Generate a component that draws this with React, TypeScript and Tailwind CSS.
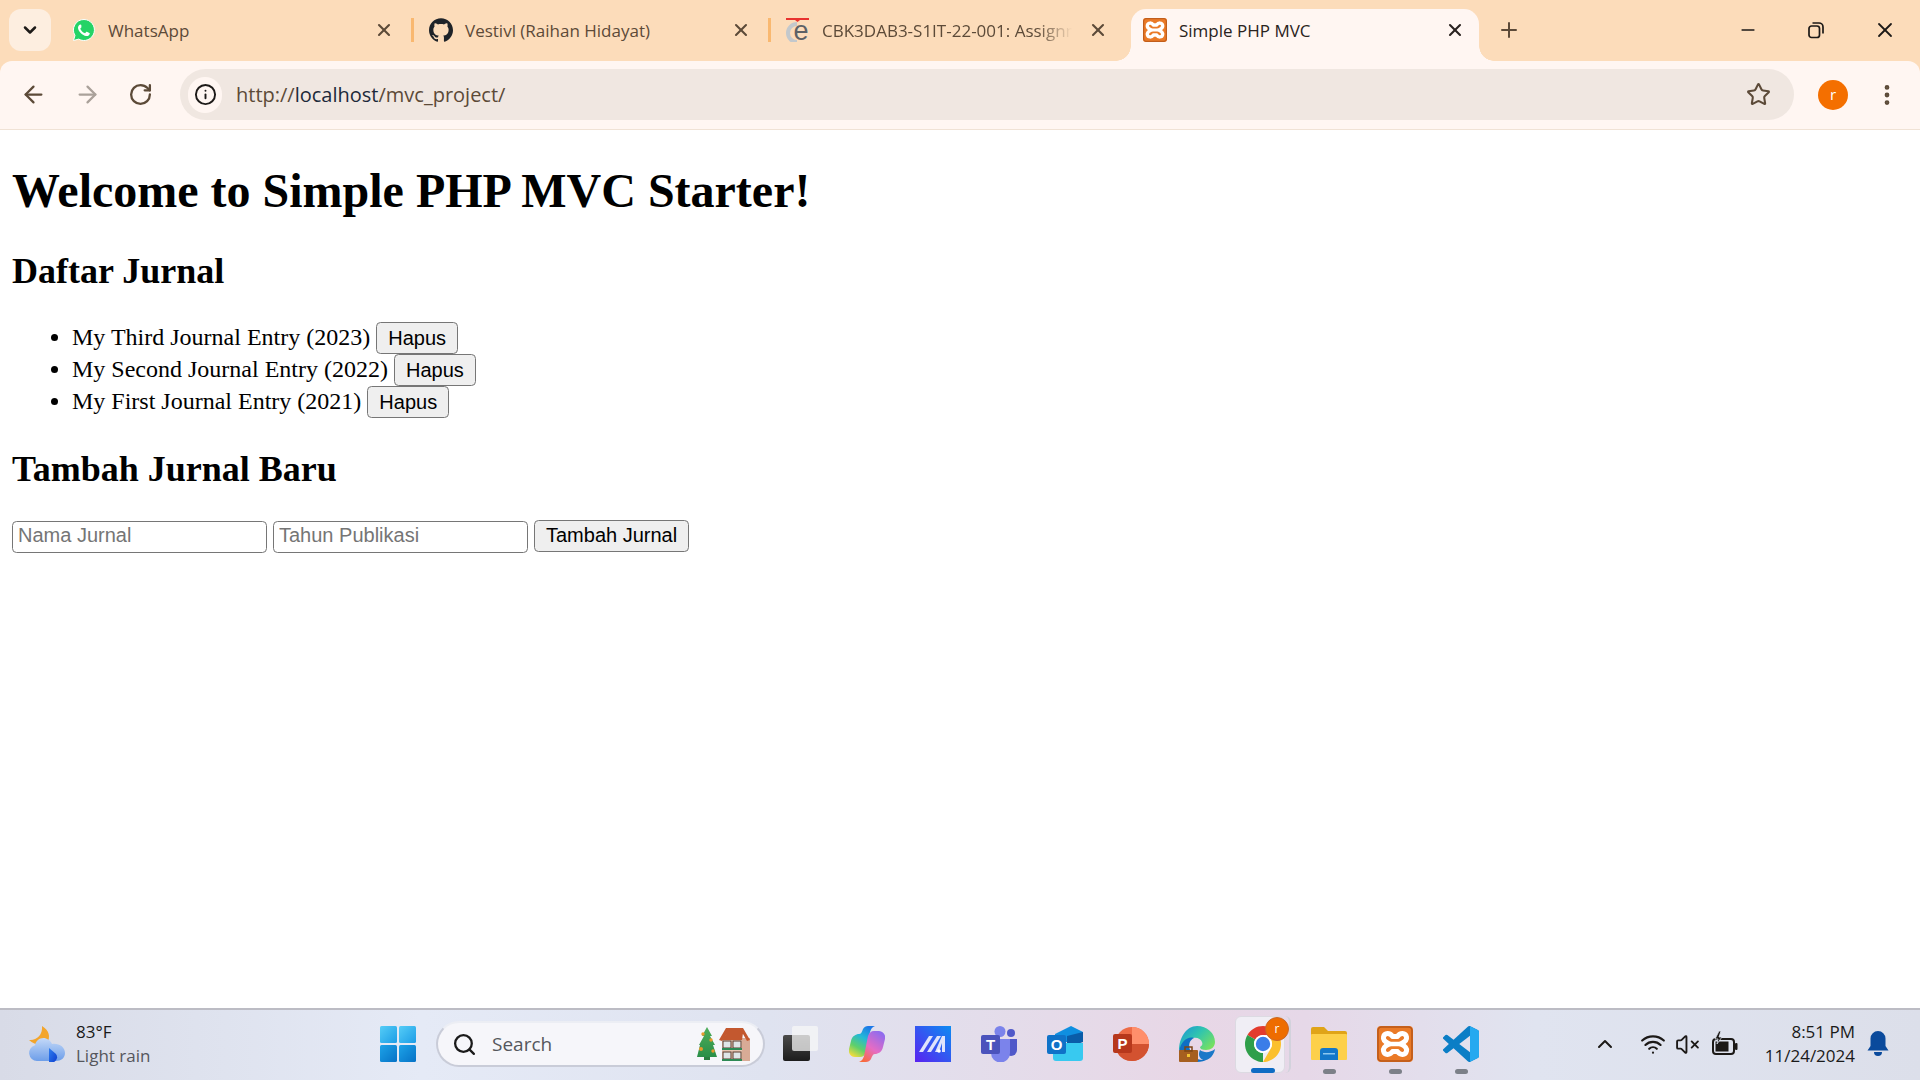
import { ArrowLeft, ArrowRight, RotateCw, Info, Star, EllipsisVertical, ChevronDown, ChevronUp, X, Plus, Minus, Search, Wifi, VolumeX } from "lucide-react";
import { SiGithub } from "react-icons/si";

const journals = [
  "My Third Journal Entry (2023)",
  "My Second Journal Entry (2022)",
  "My First Journal Entry (2021)",
];

function XamppIcon({ size }: { size: number }) {
  return (
    <svg width={size} height={size} viewBox="0 0 36 36">
      <rect width="36" height="36" rx="4" fill="#ea7a27" />
      <rect x="1" y="1" width="34" height="34" rx="3.5" fill="none" stroke="#b9581a" strokeWidth="1.5" />
      <path d="M15.5 10.5C13 6.5 7.5 6.5 6.5 11c-.7 3.2 2.5 5.5 6 7-3.5 1.500-6.700 3.800-6 7 1 4.500 6.500 4.500 9 .5h5c2.500 4 8 4 9-.5.7-3.200-2.500-5.500-6-7 3.500-1.500 6.700-3.800 6-7-1-4.500-6.500-4.500-9-.5z" fill="none" stroke="#fff" strokeWidth="5" strokeLinejoin="round" />
      <path d="M12.500 18h11" stroke="#fff" strokeWidth="4.500" />
    </svg>
  );
}

function WhatsAppIcon() {
  return (
    <svg width="24" height="24" viewBox="0 0 24 24">
      <path d="M12 1.500a10.500 10.500 0 0 0-9 15.900L1.500 22.500l5.200-1.400A10.500 10.500 0 1 0 12 1.500z" fill="#25d366" stroke="#fff" strokeWidth="1" />
      <path d="M8.500 6.500c-.5 0-1.200.3-1.700 1-.6.8-.9 1.800-.7 3 .3 1.700 1.300 3.300 2.800 4.700 1.600 1.500 3.400 2.500 5 2.800 1.200.2 2.200-.1 3-.8.6-.5.9-1.200.9-1.700 0-.3-.1-.5-.4-.6l-2.500-1.200c-.3-.1-.5 0-.7.2l-.9 1.100c-.2.2-.4.3-.7.1-.9-.4-1.800-1-2.500-1.700-.7-.7-1.300-1.500-1.700-2.400-.1-.3 0-.5.1-.7l.8-.9c.2-.2.2-.5.1-.7L9.300 7c-.1-.3-.4-.5-.8-.5z" fill="#fff" />
    </svg>
  );
}

function EduIcon() {
  return (
    <svg width="24" height="24" viewBox="0 0 24 24">
      <rect x="0" y="0" width="23" height="2" fill="#e8322f" />
      <path d="M9 2h5l-2.500 2z" fill="#e8322f" />
      <path d="M11 6a9 9 0 0 0 0 18" fill="none" stroke="#c3c8cc" strokeWidth="4" />
      <text x="15" y="22" textAnchor="middle" fontSize="27" fontFamily="Liberation Sans, sans-serif" fill="#5d6166">e</text>
    </svg>
  );
}

function Tab({ icon, title, active, separator, fade }: { icon: React.ReactNode; title: string; active?: boolean; separator?: boolean; fade?: boolean }) {
  if (active) {
    return (
      <div className="relative w-[348px] h-[52px] shrink-0 bg-[#fff6f2] rounded-t-[15px] pl-[12px]">
        <div className="absolute left-[-15px] bottom-0 w-[15px] h-[15px] bg-[radial-gradient(circle_at_0_0,transparent_14.5px,#fff6f2_15px)]" />
        <div className="absolute right-[-15px] bottom-0 w-[15px] h-[15px] bg-[radial-gradient(circle_at_100%_0,transparent_14.5px,#fff6f2_15px)]" />
        <div className="flex items-center h-[42px]">
          <div className="w-[24px] mr-[12px] shrink-0">{icon}</div>
          <span className="flex-1 min-w-0 whitespace-nowrap text-[17px] text-[#2a2320] mt-[1px]">{title}</span>
          <X size={20} strokeWidth={2.5} className="text-[#2a2320] shrink-0 mr-[14px]" />
        </div>
      </div>
    );
  }
  return (
    <div className="w-[357px] h-[52px] shrink-0 pl-[12px]">
      <div className="flex items-center h-[42px]">
        <div className="w-[24px] mr-[12px] shrink-0">{icon}</div>
        {fade ? (
          <div className="flex-1 min-w-0 mt-[1px]">
            <div className="w-[250px] overflow-hidden whitespace-nowrap text-[17px] text-[#5c4a38] [mask-image:linear-gradient(90deg,#000_86%,transparent_100%)]">{title}</div>
          </div>
        ) : (
          <span className="flex-1 min-w-0 whitespace-nowrap text-[17px] text-[#5c4a38] mt-[1px]">{title}</span>
        )}
        <X size={20} strokeWidth={2.5} className="text-[#5c4a38] shrink-0" />
        <div className={separator ? "w-[3px] h-[24px] bg-[#f9b870] ml-[17px] mr-[3px] shrink-0" : "w-[3px] h-[24px] ml-[17px] mr-[3px] shrink-0"} />
      </div>
    </div>
  );
}

function TabStrip() {
  return (
    <div className="h-[61px] shrink-0 bg-[#fcdcba] flex items-start pt-[9px] pl-[9px]">
      <div className="w-[42px] h-[42px] mr-[9px] shrink-0 rounded-[12px] bg-[#fdeee0] flex items-center justify-center">
        <ChevronDown size={20} strokeWidth={3} className="text-[#1d1a18]" />
      </div>
      <Tab icon={<WhatsAppIcon />} title="WhatsApp" separator />
      <Tab icon={<SiGithub className="text-[#1f2328] w-[24px] h-[24px]" />} title="Vestivl (Raihan Hidayat)" separator />
      <Tab icon={<EduIcon />} title="CBK3DAB3-S1IT-22-001: Assignment" fade />
      <Tab icon={<XamppIcon size={24} />} title="Simple PHP MVC" active />
      <div className="h-[42px] flex items-center ml-[18px]">
        <Plus size={24} strokeWidth={2} className="text-[#5c4a38]" />
      </div>
      <div className="h-[42px] flex items-center ml-auto text-[#1c1917]">
        <Minus size={20} strokeWidth={2} className="mr-[49px]" />
        <svg width="18" height="18" viewBox="0 0 18 18" fill="none" stroke="currentColor" strokeWidth="1.7" className="mr-[48px]">
          <rect x="2" y="5" width="10.500" height="11.500" rx="2.500" />
          <path d="M5.500 2h6.500a4 4 0 0 1 4 4v6.500" />
        </svg>
        <X size={24} strokeWidth={1.8} className="mr-[23px]" />
      </div>
    </div>
  );
}

function Toolbar() {
  return (
    <div className="h-[69px] shrink-0 bg-[#fcdcba]">
      <div className="h-[69px] bg-[#fff6f2] rounded-t-[12px] border-b border-[#f0e2d5] flex items-start pt-[8px] pl-[20px]">
        <div className="h-[51px] flex items-center text-[#5c4a38]">
          <ArrowLeft size={27} strokeWidth={2} className="mr-[27px]" />
          <ArrowRight size={27} strokeWidth={2} className="text-[#aaa19a] mr-[27px]" />
          <RotateCw size={25} strokeWidth={2.2} className="mr-[27px]" />
        </div>
        <div className="w-[1614px] h-[51px] shrink-0 rounded-full bg-[#f0e7e1] flex items-center pl-[8px]">
          <div className="w-[34px] h-[36px] rounded-full bg-[#fff6f2] flex items-center justify-center shrink-0">
            <Info size={23} strokeWidth={2} className="text-[#1d1a18]" />
          </div>
          <span className="ml-[14px] text-[20px] text-[#5c4a38]">
            http://<span className="text-[#1d2a3a]">localhost</span>/mvc_project/
          </span>
          <Star size={25} strokeWidth={2} className="text-[#5c4a38] ml-auto mr-[23px]" />
        </div>
        <div className="h-[51px] flex items-center">
          <div className="w-[30px] h-[30px] rounded-full bg-[#f46f00] flex items-center justify-center text-white text-[15px] ml-[24px]">r</div>
          <EllipsisVertical size={26} strokeWidth={2.4} className="text-[#5c4a38] ml-[26px]" />
        </div>
      </div>
    </div>
  );
}

function Page() {
  return (
    <main className="flex-1 min-h-0 bg-white text-black p-[12px] pt-0 font-['Liberation_Serif',serif] text-[24px] leading-[normal]">
      <h1 className="text-[48px] font-bold pt-[33px] mb-[33px] leading-[55px]">Welcome to Simple PHP MVC Starter!</h1>
      <h2 className="text-[36px] font-bold mb-[30px] leading-[41px]">Daftar Jurnal</h2>
      <ul className="list-disc pl-[60px] mb-[31px]">
        {journals.map((j) => (
          <li key={j}>
            {j}{" "}
            <button className="font-['Liberation_Sans',sans-serif] text-[20px] h-[32px] px-[11px] bg-[#efefef] border-[1.5px] border-[#767676] rounded-[4.5px] text-black">Hapus</button>
          </li>
        ))}
      </ul>
      <h2 className="text-[36px] font-bold mb-[30px] leading-[41px]">Tambah Jurnal Baru</h2>
      <form>
        <input placeholder="Nama Jurnal" className="font-['Liberation_Sans',sans-serif] text-[20px] w-[255px] h-[32px] px-[5px] pb-[2px] bg-white border-[1.5px] border-[#767676] rounded-[4.5px] placeholder:text-[#757575]" />{" "}
        <input placeholder="Tahun Publikasi" className="font-['Liberation_Sans',sans-serif] text-[20px] w-[255px] h-[32px] px-[5px] pb-[2px] bg-white border-[1.5px] border-[#767676] rounded-[4.5px] placeholder:text-[#757575]" />{" "}
        <button type="button" className="font-['Liberation_Sans',sans-serif] text-[20px] h-[32px] px-[11px] pb-[1px] bg-[#efefef] border-[1.5px] border-[#767676] rounded-[4.5px] text-black">Tambah Jurnal</button>
      </form>
    </main>
  );
}

function WeatherIcon() {
  return (
    <svg width="36" height="36" viewBox="0 0 36 36">
      <defs>
        <linearGradient id="cl" x1="0" y1="0" x2="0" y2="1"><stop offset="0" stopColor="#c4d9f8" /><stop offset="1" stopColor="#6d9ee9" /></linearGradient>
        <linearGradient id="dr" x1="0" y1="0" x2="1" y2="1"><stop offset="0" stopColor="#2f7fef" /><stop offset="1" stopColor="#0e3fd0" /></linearGradient>
      </defs>
      <path d="M13 0c7 4 9 11 5 17-5 3-13 2-18-3 7 1 14-5 13-14z" fill="#f3a52c" />
      <path d="M8 35a8 8 0 0 1-2-15.700C7 14 12 11 17 12.500c3 1 5 3 6 5.500 7-1 13 3 13 9 0 5-4 8-9 8z" fill="url(#cl)" />
      <path d="M20 22l7 6a5.500 5.500 0 0 1-7 8z" fill="url(#dr)" />
    </svg>
  );
}

function WindowsIcon() {
  return (
    <svg width="36" height="36" viewBox="0 0 36 36">
      <defs>
        <linearGradient id="w1" x1="0" y1="0" x2="1" y2="1"><stop offset="0" stopColor="#55cdf7" /><stop offset="1" stopColor="#1d9de6" /></linearGradient>
        <linearGradient id="w2" x1="0" y1="0" x2="1" y2="1"><stop offset="0" stopColor="#1da3e8" /><stop offset="1" stopColor="#0672c6" /></linearGradient>
      </defs>
      <rect x="0" y="0" width="17" height="17" rx="1.500" fill="url(#w1)" />
      <rect x="19" y="0" width="17" height="17" rx="1.500" fill="url(#w1)" />
      <rect x="0" y="19" width="17" height="17" rx="1.500" fill="url(#w2)" />
      <rect x="19" y="19" width="17" height="17" rx="1.500" fill="url(#w2)" />
    </svg>
  );
}

function SearchDecor() {
  return (
    <svg width="54" height="34" viewBox="0 0 54 34">
      <defs>
        <linearGradient id="tr" x1="0" y1="0" x2="0" y2="1"><stop offset="0" stopColor="#4fae5b" /><stop offset="1" stopColor="#2a8f48" /></linearGradient>
      </defs>
      <path d="M10 0l5 9h-2l5 9h-2l4 12H0l3-12H2l5-9H5z" fill="url(#tr)" />
      <rect x="7" y="30" width="6" height="3" fill="#2a7d40" />
      <circle cx="6" cy="7" r="1.700" fill="#e89a2c" /><circle cx="14" cy="13" r="1.700" fill="#e89a2c" /><circle cx="4" cy="22" r="2" fill="#e89a2c" /><circle cx="16" cy="24" r="1.700" fill="#e89a2c" />
      <rect x="25" y="11" width="28" height="23" fill="#e6c7b4" />
      <rect x="45" y="11" width="8" height="23" fill="#d8ab96" />
      <path d="M22 13l7-12h17l7 12-3 1-4-7H30l-5 7z" fill="#c3582f" />
      <path d="M25 13l5-7h16l-1 7z" fill="#c3582f" />
      <rect x="26" y="14" width="8" height="7" fill="#dfe6e8" stroke="#5b3a2c" /><rect x="36" y="14" width="8" height="7" fill="#dfe6e8" stroke="#5b3a2c" />
      <rect x="26" y="25" width="8" height="7" fill="#dfe6e8" stroke="#5b3a2c" /><rect x="36" y="25" width="8" height="7" fill="#dfe6e8" stroke="#5b3a2c" />
      <rect x="25" y="21" width="20" height="2" fill="#2e8a55" /><rect x="25" y="32" width="20" height="2" fill="#2e8a55" />
    </svg>
  );
}

function TaskViewIcon() {
  return (
    <svg width="36" height="36" viewBox="0 0 36 36">
      <defs>
        <linearGradient id="tv" x1="0" y1="0" x2="0" y2="1"><stop offset="0" stopColor="#4a4a4a" /><stop offset="1" stopColor="#1c1c1c" /></linearGradient>
      </defs>
      <rect x="0" y="9" width="27" height="26" rx="2" fill="url(#tv)" />
      <rect x="9" y="0" width="26" height="25" rx="2" fill="#f7f7f7" fillOpacity="0.75" />
    </svg>
  );
}

function CopilotIcon() {
  return (
    <svg width="36" height="36" viewBox="0 0 36 36">
      <defs>
        <linearGradient id="c1" x1="0.7" y1="0" x2="0.2" y2="1"><stop offset="0" stopColor="#1d78e8" /><stop offset="0.35" stopColor="#22b8d8" /><stop offset="0.7" stopColor="#5fd06a" /><stop offset="1" stopColor="#f3dc3c" /></linearGradient>
        <linearGradient id="c2" x1="0.8" y1="0" x2="0.2" y2="1"><stop offset="0" stopColor="#8b6cf0" /><stop offset="0.55" stopColor="#e56cc4" /><stop offset="1" stopColor="#f86a3c" /></linearGradient>
      </defs>
      <path d="M14 3c1-2 3-3 5-3h7c-3 1-4 3-5 6l-4 20c-1 3-3 5-6 5H6c-4 0-7-4-6-8l2-8c1-5 5-7 8-7 2 0 3-2 4-5z" fill="url(#c1)" />
      <path d="M22 33c-1 2-3 3-5 3h-7c3-1 4-3 5-6l4-20c1-3 3-5 6-5h5c4 0 7 4 6 8l-2 8c-1 5-5 7-8 7-2 0-3 2-4 5z" fill="url(#c2)" />
    </svg>
  );
}

function BlueMIcon() {
  return (
    <svg width="36" height="36" viewBox="0 0 36 36">
      <defs>
        <linearGradient id="m1" x1="0" y1="1" x2="1" y2="0"><stop offset="0" stopColor="#5a22f0" /><stop offset="1" stopColor="#0d8cf2" /></linearGradient>
      </defs>
      <rect width="36" height="36" fill="url(#m1)" />
      <path d="M4 26L14 10h4L8 26zM12 26l10-16h4l-10 16zM20 26l7-16h3v16h-3v-9l-3 9z" fill="#dfe3fb" />
      <circle cx="24" cy="25" r="1.800" fill="#fff" />
    </svg>
  );
}

function TeamsIcon() {
  return (
    <svg width="36" height="36" viewBox="0 0 36 36">
      <circle cx="19" cy="5.500" r="5.500" fill="#7b83eb" />
      <circle cx="30" cy="7" r="4" fill="#5059c9" />
      <path d="M24 13h12v11a6 6 0 0 1-12 0z" fill="#5059c9" />
      <path d="M10 13h19v14a9 9 0 0 1-19 0z" fill="#7b83eb" />
      <rect x="0" y="9" width="19" height="19" rx="2" fill="#4b53bc" />
      <text x="9.500" y="24" textAnchor="middle" fontSize="15" fontWeight="700" fontFamily="Liberation Sans, sans-serif" fill="#fff">T</text>
    </svg>
  );
}

function OutlookIcon() {
  return (
    <svg width="36" height="36" viewBox="0 0 36 36">
      <path d="M8 8L24 0l12 6v10H8z" fill="#0f8fe0" />
      <path d="M20 10L36 6v10l-16 6z" fill="#0a5ca8" />
      <path d="M6 17h30v15a3 3 0 0 1-3 3H9a3 3 0 0 1-3-3z" fill="#38c9f0" />
      <rect x="0" y="9" width="19" height="19" rx="2" fill="#0f72c8" />
      <text x="9.500" y="24" textAnchor="middle" fontSize="15" fontWeight="700" fontFamily="Liberation Sans, sans-serif" fill="#fff">O</text>
    </svg>
  );
}

function PowerPointIcon() {
  return (
    <svg width="36" height="36" viewBox="0 0 36 36">
      <circle cx="19" cy="18" r="17" fill="#ed6c47" />
      <path d="M19 1a17 17 0 0 1 17 17H19z" fill="#ff8f6b" />
      <path d="M19 18h17a17 17 0 0 1-17 17 17 17 0 0 1-15-9z" fill="#d35230" />
      <rect x="0" y="8" width="19" height="19" rx="2" fill="#b7381c" />
      <text x="9.500" y="23" textAnchor="middle" fontSize="15" fontWeight="700" fontFamily="Liberation Sans, sans-serif" fill="#fff">P</text>
    </svg>
  );
}

function EdgeIcon() {
  return (
    <svg width="36" height="36" viewBox="0 0 36 36">
      <defs>
        <linearGradient id="e1" x1="0" y1="0" x2="1" y2="0.700"><stop offset="0" stopColor="#1b8fd8" /><stop offset="0.5" stopColor="#2fc4b0" /><stop offset="1" stopColor="#76e060" /></linearGradient>
      </defs>
      <path d="M18 0c10 0 18 7 18 16 0 5-4 8-9 8-4 0-6-1-6-3 2-1 3-3 2-5-1-3-5-5-9-4-7 1-12 7-14 13C0 12 7 0 18 0z" fill="url(#e1)" />
      <path d="M0 25C2 15 9 10 15 12c-4 2-6 6-4 12 2 7 9 12 18 9-3 2-7 3-11 3-9 0-15-5-18-11z" fill="#0f6fc4" />
      <path d="M21 24c4 3 10 3 15-1-1 6-5 10-9 11-5 1-9-4-6-10z" fill="#1b78c8" />
      <rect x="0" y="24" width="19" height="12" rx="1" fill="#a65f1f" />
      <rect x="6" y="21" width="7" height="4" fill="none" stroke="#7d4514" strokeWidth="1.500" />
      <rect x="8" y="28" width="3" height="3" fill="#f2c230" />
    </svg>
  );
}

function ChromeIcon() {
  return (
    <svg width="36" height="36" viewBox="4 4 40 40">
      <path d="M6.680 14A20 20 0 0 1 41.320 14L24 14A10 10 0 0 0 15.340 19Z" fill="#e33b2e" />
      <path d="M41.320 14A20 20 0 0 1 24 44L32.660 29A10 10 0 0 0 32.660 19Z" fill="#fbc02d" />
      <path d="M24 44A20 20 0 0 1 6.680 14L15.340 19A10 10 0 0 0 24 34Z" fill="#2f9e4a" />
      <circle cx="24" cy="24" r="10" fill="#fff" />
      <circle cx="24" cy="24" r="8" fill="#3b7de8" />
    </svg>
  );
}

function FolderIcon() {
  return (
    <svg width="36" height="36" viewBox="0 0 36 36">
      <path d="M0 3a2 2 0 0 1 2-2h11l4 4h17a2 2 0 0 1 2 2v6H0z" fill="#e0a418" />
      <rect x="0" y="8" width="36" height="26" rx="1" fill="#fdd04a" />
      <path d="M9 25a3 3 0 0 1 3-3h12a3 3 0 0 1 3 3v9H9z" fill="#1477c9" />
      <rect x="12" y="27" width="12" height="1.500" fill="#8cc7ef" />
    </svg>
  );
}

function VSCodeIcon() {
  return (
    <svg width="36" height="36" viewBox="0 0 24 24">
      <path d="M23.150 2.587L18.210.21a1.494 1.494 0 0 0-1.705.29l-9.460 8.630-4.120-3.128a.999.999 0 0 0-1.276.057L.327 7.261A1 1 0 0 0 .326 8.740L3.899 12 .326 15.260a1 1 0 0 0 .001 1.479L1.650 17.940a.999.999 0 0 0 1.276.057l4.120-3.128 9.460 8.630a1.492 1.492 0 0 0 1.704.29l4.942-2.377A1.500 1.500 0 0 0 24 20.060V3.939a1.500 1.500 0 0 0-.85-1.352zm-5.146 14.861L10.826 12l7.178-5.448v10.896z" fill="#0b7ec6" />
      <path d="M18 .1l5.150 2.490A1.500 1.500 0 0 1 24 3.940v16.120a1.500 1.500 0 0 1-.85 1.350L18 23.900z" fill="#25a9f0" />
    </svg>
  );
}

function BatteryIcon() {
  return (
    <svg width="26" height="28" viewBox="0 0 26 28" className="text-[#1c1917]">
      <rect x="1" y="9" width="21" height="15" rx="3" fill="none" stroke="currentColor" strokeWidth="2" />
      <rect x="3.500" y="11.500" width="13" height="10" fill="currentColor" />
      <rect x="23" y="13" width="2.500" height="7" rx="1" fill="currentColor" />
      <path d="M7 1L3 9h3l-1 5 5-7H7l2-6z" fill="currentColor" stroke="#e0e4f0" strokeWidth="0.8" />
    </svg>
  );
}

function BellIcon() {
  return (
    <svg width="22" height="26" viewBox="0 0 22 26" fill="#0a4a9c">
      <path d="M11 0a7.500 7.500 0 0 1 7.500 7.500V15l3 4.500H.5l3-4.500V7.500A7.500 7.500 0 0 1 11 0z" />
      <path d="M7 21h8a4 4 0 0 1-8 0z" />
    </svg>
  );
}

function PinDot() {
  return <div className="w-[13px] h-[5px] rounded-full bg-[#7c8088] mx-auto" />;
}

function Taskbar() {
  return (
    <footer className="h-[72px] shrink-0 border-t-2 border-[#bcbcc4] pb-[2px] flex items-center bg-[linear-gradient(90deg,#d8dbe7_0%,#e5eaf6_22%,#dfe3f0_40%,#e8d7e6_62%,#e6d8e8_68%,#e0e4f0_80%,#dcdfea_100%)] font-['Open_Sans',sans-serif]">
      <div className="w-[380px] shrink-0 pl-[29px] flex items-center">
        <WeatherIcon />
        <div className="ml-[11px] leading-[24px] text-[17px]">
          <div className="text-[#1a1a1a]">83°F</div>
          <div className="text-[#55565c]">Light rain</div>
        </div>
      </div>
      <WindowsIcon />
      <div className="w-[329px] h-[46px] ml-[20px] mr-[18px] shrink-0 rounded-full bg-[#f6f6fa] border-2 border-[#c9ccd8] border-t-[#eceef4] flex items-center pl-[14px]">
        <Search size={25} strokeWidth={2.2} className="text-[#1a1a1a]" />
        <span className="ml-[15px] text-[19px] text-[#55565c]">Search</span>
        <div className="ml-auto mr-[12px]"><SearchDecor /></div>
      </div>
      <div className="flex items-center gap-[30px]">
        <TaskViewIcon />
        <CopilotIcon />
        <BlueMIcon />
        <TeamsIcon />
        <OutlookIcon />
        <PowerPointIcon />
        <EdgeIcon />
        <div className="relative w-[36px] h-[36px]">
          <div className="absolute left-[-5px] top-[-10px] w-[51px] h-[57px] rounded-[6px] border-r-2 border-[#d2d2dc]" />
          <div className="absolute left-[-10px] top-[-10px] w-[50px] h-[57px] rounded-[6px] bg-[#f0eef5] border border-[#dcdae2]" />
          <div className="relative"><ChromeIcon /></div>
          <div className="absolute left-[20px] top-[-9px] w-[24px] h-[24px] rounded-full bg-[#ee6c00] border border-[#c9662a] flex items-center justify-center text-white text-[12px]">r</div>
          <div className="absolute left-[6px] top-[42px] w-[24px] h-[5px] rounded-full bg-[#0f6cc4]" />
        </div>
        <div className="relative h-[36px]"><FolderIcon /><div className="absolute left-0 right-0 top-[43px]"><PinDot /></div></div>
        <div className="relative h-[36px]"><XamppIcon size={36} /><div className="absolute left-0 right-0 top-[43px]"><PinDot /></div></div>
        <div className="relative h-[36px]"><VSCodeIcon /><div className="absolute left-0 right-0 top-[43px]"><PinDot /></div></div>
      </div>
      <div className="ml-auto flex items-center text-[#1c1917]">
        <ChevronUp size={24} strokeWidth={2} className="mr-[23px]" />
        <Wifi size={26} strokeWidth={2} className="mr-[9px]" />
        <VolumeX size={25} strokeWidth={1.8} className="mr-[12px]" />
        <BatteryIcon />
        <div className="ml-[27px] text-right text-[17px] leading-[24px] text-[#1a1a1a]">
          <div>8:51 PM</div>
          <div>11/24/2024</div>
        </div>
        <div className="ml-[12px] mr-[31px]"><BellIcon /></div>
      </div>
    </footer>
  );
}

export default function App() {
  return (
    <div className="w-[1920px] h-[1080px] flex flex-col overflow-hidden font-['Open_Sans',sans-serif]">
      <TabStrip />
      <Toolbar />
      <Page />
      <Taskbar />
    </div>
  );
}
